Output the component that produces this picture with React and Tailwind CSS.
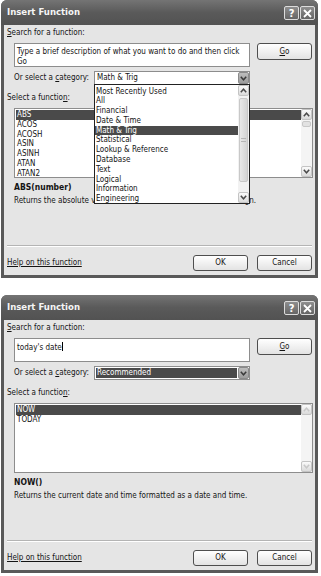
import React from 'react';

function Chevron({ up, color = '#474747' }) {
  return (
    <svg width="7" height="5" viewBox="0 0 7 5">
      <polyline
        points={up ? '0.8,4.2 3.5,1.2 6.2,4.2' : '0.8,0.8 3.5,3.8 6.2,0.8'}
        fill="none"
        stroke={color}
        strokeWidth="1.5"
      />
    </svg>
  );
}

function ArrowBtn({ up, disabled, className = '' }) {
  return (
    <div
      className={`flex items-center justify-center rounded-[2px] border border-[#c4c4c4] bg-gradient-to-b from-[#fbfbfb] to-[#dadada] ${className}`}
    >
      <Chevron up={up} color={disabled ? '#c8c8c8' : '#4a4a4a'} />
    </div>
  );
}

function Cursor() {
  return (
    <svg width="11" height="16" viewBox="0 0 11 16" className="absolute left-[202px] top-[127px]">
      <path
        d="M0.5 0.5 L0.5 12.5 L3.4 9.8 L5.6 14.8 L7.6 13.9 L5.5 9.1 L9.5 9.1 Z"
        fill="#fff"
        stroke="#111"
        strokeWidth="1"
        strokeLinejoin="round"
      />
    </svg>
  );
}

function TitleBar() {
  return (
    <div className="h-[25px] flex items-center justify-between pl-[6px] pr-[3px] rounded-t-[6px] bg-gradient-to-b from-[#747474] via-[#5a5a5a] to-[#525252]">
      <span className="text-[9.5px] font-bold text-[#f5f5f5] font-['DejaVu_Sans',sans-serif] font-stretch-condensed">
        Insert Function
      </span>
      <div className="flex gap-[1px] mt-[1px]">
        <div className="w-[15px] h-[14px] rounded-[2px] border border-[#dcdcdc] bg-gradient-to-b from-[#8e8e8e] to-[#666666] flex items-center justify-center text-white font-bold text-[11px] leading-none">
          ?
        </div>
        <div className="w-[15px] h-[14px] rounded-[2px] border border-[#dcdcdc] bg-gradient-to-b from-[#8e8e8e] to-[#666666] flex items-center justify-center">
          <svg width="9" height="9" viewBox="0 0 9 9">
            <path d="M1 1 L8 8 M8 1 L1 8" stroke="#fff" strokeWidth="1.8" />
          </svg>
        </div>
      </div>
    </div>
  );
}

const categories = [
  'Most Recently Used',
  'All',
  'Financial',
  'Date & Time',
  'Math & Trig',
  'Statistical',
  'Lookup & Reference',
  'Database',
  'Text',
  'Logical',
  'Information',
  'Engineering',
];

function CategoryDropdown() {
  return (
    <div className="absolute left-[-1px] top-full w-[156px] h-[120px] border border-[#222] bg-white flex z-10">
      <div className="flex-1 pt-[1.5px] overflow-hidden">
        {categories.map((c, i) => (
          <div
            key={c}
            className={`h-[9.8px] leading-[9.8px] pl-[1px] whitespace-nowrap ${
              i === 4 ? 'bg-[#4a4a4a] text-white' : ''
            }`}
          >
            {c}
          </div>
        ))}
      </div>
      <div className="w-[11px] flex flex-col bg-[#f2f2f2]">
        <ArrowBtn up className="h-[11px]" />
        <div className="flex-1 py-[2px] px-[1px]">
          <div className="h-[84px] rounded-[2px] border border-[#c8c8c8] bg-gradient-to-r from-[#e9e9e9] to-[#d4d4d4] flex items-center justify-center">
            <div className="w-[5px] h-[4px] border-y border-[#b5b5b5]" />
          </div>
        </div>
        <ArrowBtn className="h-[11px]" />
      </div>
    </div>
  );
}

function Dialog({ search, category, categoryHighlighted, open, items, selected, sig, desc, thumb, disabledScroll }) {
  return (
    <div className="relative w-[317px] h-[278px] flex flex-col rounded-t-[6px] bg-[#595959]">
      <TitleBar />
      <div className="flex-1 mx-[3px] mb-[3px] bg-[#e5e5e5] flex flex-col text-[8px] leading-[10px] text-[#141414]">
        <div className="mt-[3px] ml-[3px]">
          <span className="underline">S</span>earch for a function:
        </div>

        <div className="mt-[5px] flex items-start">
          <div className="ml-[10px] w-[236px] h-[24px] border border-[#8d8d8d] bg-white px-[2px] pt-[3px] whitespace-nowrap">
            {search}
          </div>
          <div className="ml-[7px] w-[55px] h-[17px] rounded-[3px] border border-[#4e4e4e] bg-gradient-to-b from-white to-[#e3e3e3] flex items-center justify-center">
            <span>
              <span className="underline">G</span>o
            </span>
          </div>
        </div>

        <div className="mt-[4px] ml-[10px] flex items-center">
          <span className="w-[80px] whitespace-nowrap">
            Or select a <span className="underline">c</span>ategory:
          </span>
          <div className="relative w-[156px] h-[14px] border border-[#8d8d8d] bg-white flex items-center pl-[1px]">
            <div
              className={`flex-1 h-[10px] leading-[10px] pl-[1px] ${
                categoryHighlighted ? 'bg-[#4a4a4a] text-white' : ''
              }`}
            >
              {category}
            </div>
            <div className="ml-[1px] w-[11px] h-[12px] rounded-[2px] border border-[#8a8a8a] bg-gradient-to-b from-[#bdbdbd] to-[#9c9c9c] flex items-center justify-center">
              <Chevron color="#3a3a3a" />
            </div>
            {open && <CategoryDropdown />}
          </div>
        </div>

        <div className="mt-[8px] ml-[3px]">
          Select a functio<span className="underline">n</span>:
        </div>

        <div className="mt-[5px] ml-[10px] w-[299px] h-[70px] border border-[#8d8d8d] bg-white flex">
          <div className="flex-1 pl-[1px] pt-[1px]">
            {items.map((it, i) => (
              <div
                key={it}
                className={`h-[9.8px] leading-[9.8px] pl-[1px] ${
                  i === selected ? 'bg-[#4a4a4a] text-white' : ''
                }`}
              >
                {it}
              </div>
            ))}
          </div>
          <div className="w-[11px] flex flex-col bg-[#f4f4f4]">
            <ArrowBtn up disabled={disabledScroll} className="h-[11px]" />
            {thumb && (
              <div className="mx-[1px] mt-[1px] h-[6px] rounded-[2px] border border-[#c8c8c8] bg-[#e2e2e2]" />
            )}
            <div className="flex-1" />
            <ArrowBtn disabled={disabledScroll} className="h-[11px]" />
          </div>
        </div>

        <div className="mt-[4px] ml-[10px] font-bold text-[8.5px]">{sig}</div>
        <div className="mt-[4px] ml-[10px] whitespace-nowrap">{desc}</div>

        <div className="flex-1" />

        <div className="mx-[3px] border-t border-[#b4b4b4] border-b border-b-white" />

        <div className="mt-[8px] mb-[4px] flex items-center">
          <span className="ml-[3px] underline">Help on this function</span>
          <div className="flex-1" />
          <div className="w-[55px] h-[16px] rounded-[3px] border border-[#4e4e4e] bg-gradient-to-b from-white to-[#e3e3e3] flex items-center justify-center">
            OK
          </div>
          <div className="ml-[9px] mr-[3px] w-[55px] h-[16px] rounded-[3px] border border-[#4e4e4e] bg-gradient-to-b from-white to-[#e3e3e3] flex items-center justify-center">
            Cancel
          </div>
        </div>
      </div>
      {open && <Cursor />}
    </div>
  );
}

export default function App() {
  return (
    <div className="w-[321px] h-[576px] bg-white pl-[1px] font-['DejaVu_Sans_Condensed','DejaVu_Sans',sans-serif] font-stretch-condensed">
      <Dialog
        search={
          <>
            Type a brief description of what you want to do and then click
            <br />
            Go
          </>
        }
        category="Math & Trig"
        open
        items={['ABS', 'ACOS', 'ACOSH', 'ASIN', 'ASINH', 'ATAN', 'ATAN2']}
        selected={0}
        sig="ABS(number)"
        desc="Returns the absolute value of a number, a number without its sign."
        thumb
      />
      <div className="h-[17px]" />
      <Dialog
        search={
          <>
            today's date
            <span className="inline-block w-[1px] h-[9px] bg-black align-[-1px]" />
          </>
        }
        category="Recommended"
        categoryHighlighted
        items={['NOW', 'TODAY']}
        selected={0}
        sig="NOW()"
        desc="Returns the current date and time formatted as a date and time."
        disabledScroll
      />
    </div>
  );
}
